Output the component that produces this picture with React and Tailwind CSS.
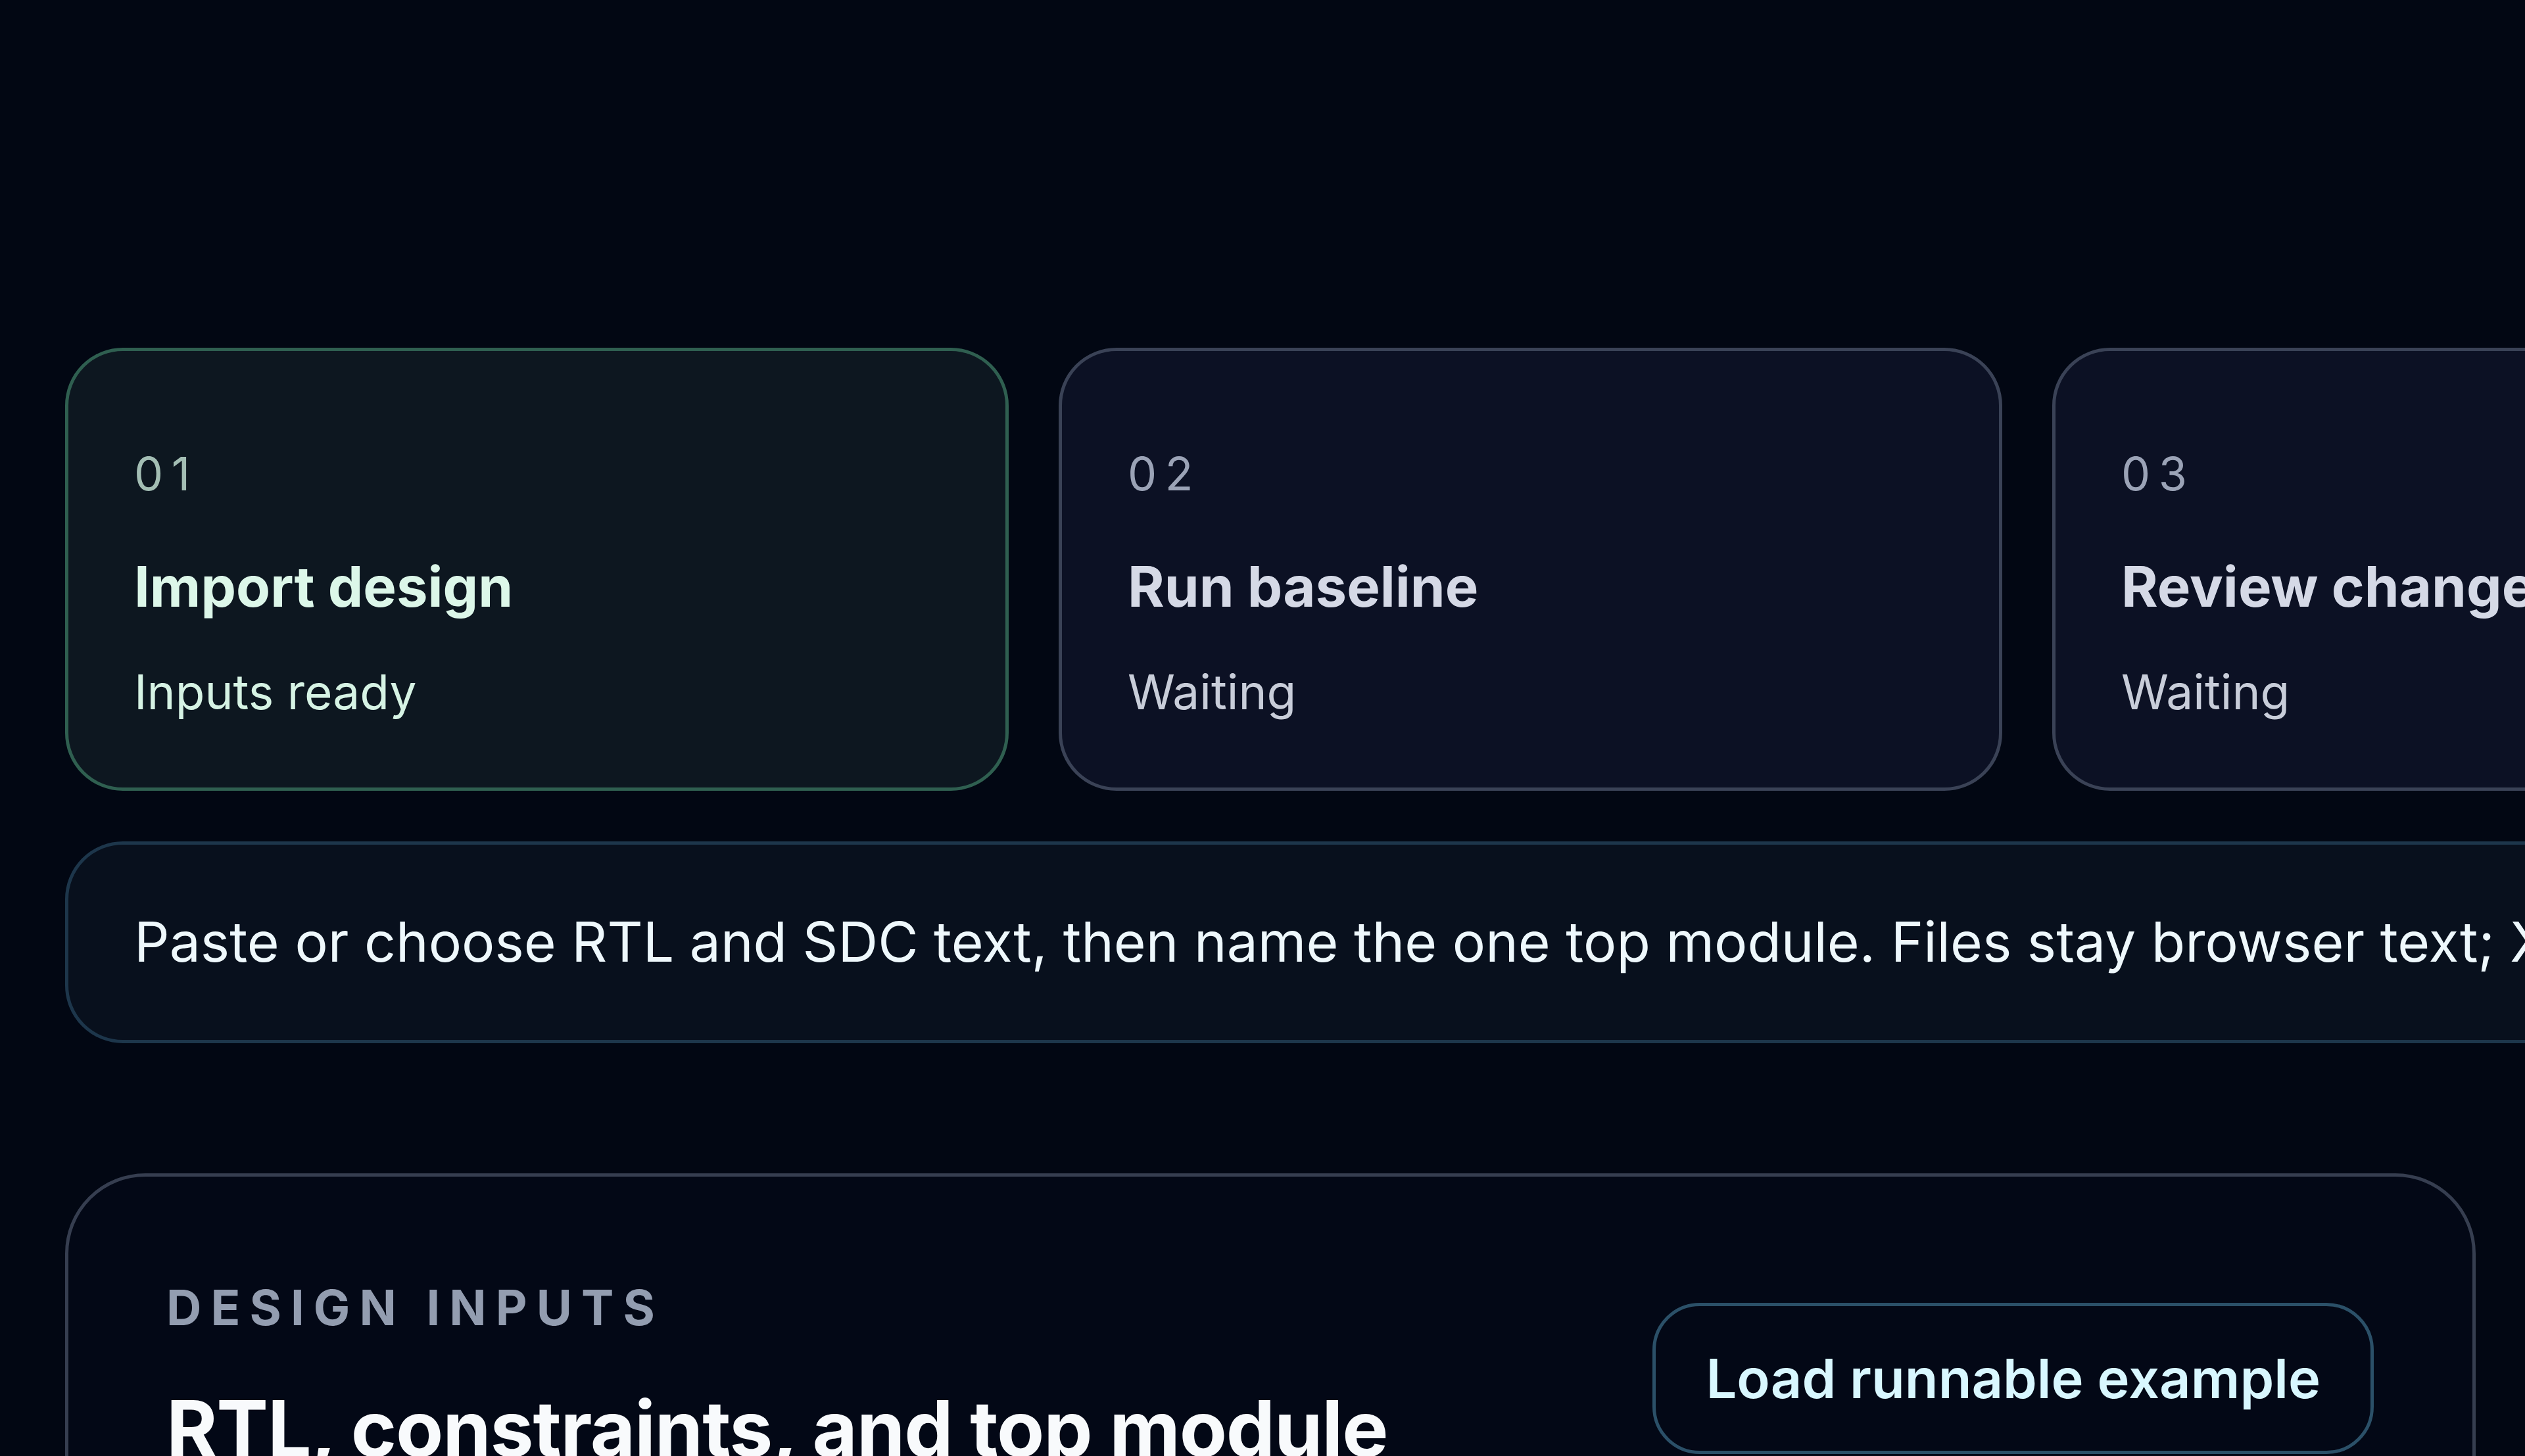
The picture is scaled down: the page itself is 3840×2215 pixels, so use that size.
import React from "react";

const steps = [
  { n: "01", title: "Import design", status: "Inputs ready", active: true },
  { n: "02", title: "Run baseline", status: "Waiting", active: false },
  { n: "03", title: "Review changes", status: "Waiting", active: false },
  { n: "04", title: "Export report", status: "Waiting", active: false },
];

function StepCard({ step }) {
  const active = step.active;
  return (
    <div
      className={
        active
          ? "flex w-[1435px] shrink-0 flex-col rounded-[88px] border-[5px] border-[#2f5f50] bg-[#0d1720] px-[100px] pt-[152px] pb-[109px]"
          : "flex w-[1435px] shrink-0 flex-col rounded-[88px] border-[5px] border-[#3a4256] bg-[#0c1124] px-[100px] pt-[152px] pb-[109px]"
      }
    >
      <div
        className={
          active
            ? "text-[70px] leading-[70px] tracking-[0.18em] text-[#a3beb4]"
            : "text-[70px] leading-[70px] tracking-[0.18em] text-[#9ba3b6]"
        }
      >
        {step.n}
      </div>
      <div
        className={
          active
            ? "mt-[95px] whitespace-nowrap text-[85px] leading-[84px] font-bold text-[#dcf7e9]"
            : "mt-[95px] whitespace-nowrap text-[85px] leading-[84px] font-bold text-[#d5d9e6]"
        }
      >
        {step.title}
      </div>
      <div
        className={
          active
            ? "mt-[82px] text-[73px] leading-[72px] text-[#d6f3e4]"
            : "mt-[82px] text-[73px] leading-[72px] text-[#c8cdd9]"
        }
      >
        {step.status}
      </div>
    </div>
  );
}

export default function App() {
  return (
    <div className="h-screen w-full overflow-hidden bg-[#020713] font-['Inter','Noto_Sans',sans-serif] antialiased">
      <div className="flex flex-col pl-[99px] pt-[529px]">
        <div className="flex gap-[76px]">
          {steps.map((s) => (
            <StepCard key={s.n} step={s} />
          ))}
        </div>

        <div className="mt-[77px] w-[4700px] shrink-0 rounded-[88px] border-[5px] border-[#1d364b] bg-[#08101d] px-[100px] pt-[106px] pb-[107px]">
          <p className="whitespace-nowrap text-[84px] leading-[84px] text-[#eef8fc]">
            Paste or choose RTL and SDC text, then name the one top module. Files stay browser text; XLS-style uploads are never sent anywhere.
          </p>
        </div>

        <section className="mt-[198px] w-[3666px] rounded-[122px] border-[5px] border-[#363e50] bg-[#030816] pl-[149px] pr-[150px] pt-[162px] pb-[160px]">
          <div className="flex items-start justify-between">
            <div className="flex flex-col">
              <div className="text-[74px] leading-[74px] font-bold uppercase tracking-[0.19em] text-[#939db0]">
                Design inputs
              </div>
              <h2 className="mt-[88px] text-[118px] leading-[118px] font-bold tracking-[-0.01em] text-[#f8fafc]">
                RTL, constraints, and top module
              </h2>
            </div>
            <button className="mt-[30px] rounded-[72px] border-[5px] border-[#2b5068] bg-[#030816] px-[76px] py-[68px] text-[83px] leading-[84px] font-semibold text-[#d8f7ff]">
              Load runnable example
            </button>
          </div>
          <div className="mt-[120px] h-[900px] rounded-[60px] border-[5px] border-[#1d2a3c] bg-[#050b18]" />
        </section>
      </div>
    </div>
  );
}
